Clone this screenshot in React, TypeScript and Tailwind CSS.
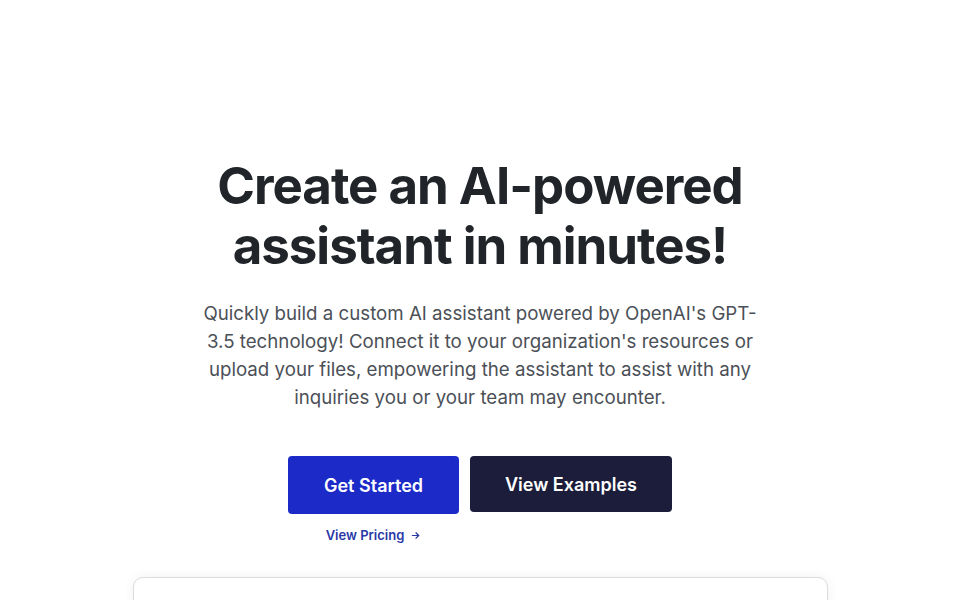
import React from "react";

export default function App() {
  return (
    <div className="min-h-[600px] h-[600px] bg-white font-['Inter',sans-serif] overflow-hidden">
      <section className="flex flex-col items-center pt-[156px] text-center">
        <h1 className="text-[51px] font-bold leading-[60px] tracking-[-0.02em] text-[#212529] max-w-[600px]">
          Create an AI-powered assistant in minutes!
        </h1>
        <p className="mt-[24px] max-w-[570px] text-[18.7px] leading-[28px] text-[#4b5057]">
          Quickly build a custom AI assistant powered by OpenAI's GPT-<wbr />3.5 technology! Connect it to your organization's resources or upload your files, empowering the assistant to assist with any inquiries you or your team may encounter.
        </p>
        <div className="mt-[44px] flex items-start gap-[11px]">
          <div className="flex flex-col items-center">
            <button className="h-[58px] w-[171px] rounded-[4px] bg-[#1c2ac8] text-[18px] font-semibold text-white">
              Get Started
            </button>
            <a className="mt-[12px] flex items-center gap-[6px] text-[13px] font-semibold text-[#2838a6]">
              View Pricing
              <svg width="11" height="11" viewBox="0 0 24 24" fill="none" stroke="currentColor" strokeWidth="2.5" strokeLinecap="round" strokeLinejoin="round">
                <path d="M5 12h14" />
                <path d="M13 6l6 6-6 6" />
              </svg>
            </a>
          </div>
          <button className="h-[56px] w-[202px] rounded-[4px] bg-[#1b1d3a] text-[18px] font-semibold text-white">
            View Examples
          </button>
        </div>
        <div className="mt-[31px] h-[60px] w-[695px] rounded-[10px] border border-[#dcdcdc] bg-white shadow-[0_0_12px_rgba(0,0,0,0.06)]" />
      </section>
    </div>
  );
}
